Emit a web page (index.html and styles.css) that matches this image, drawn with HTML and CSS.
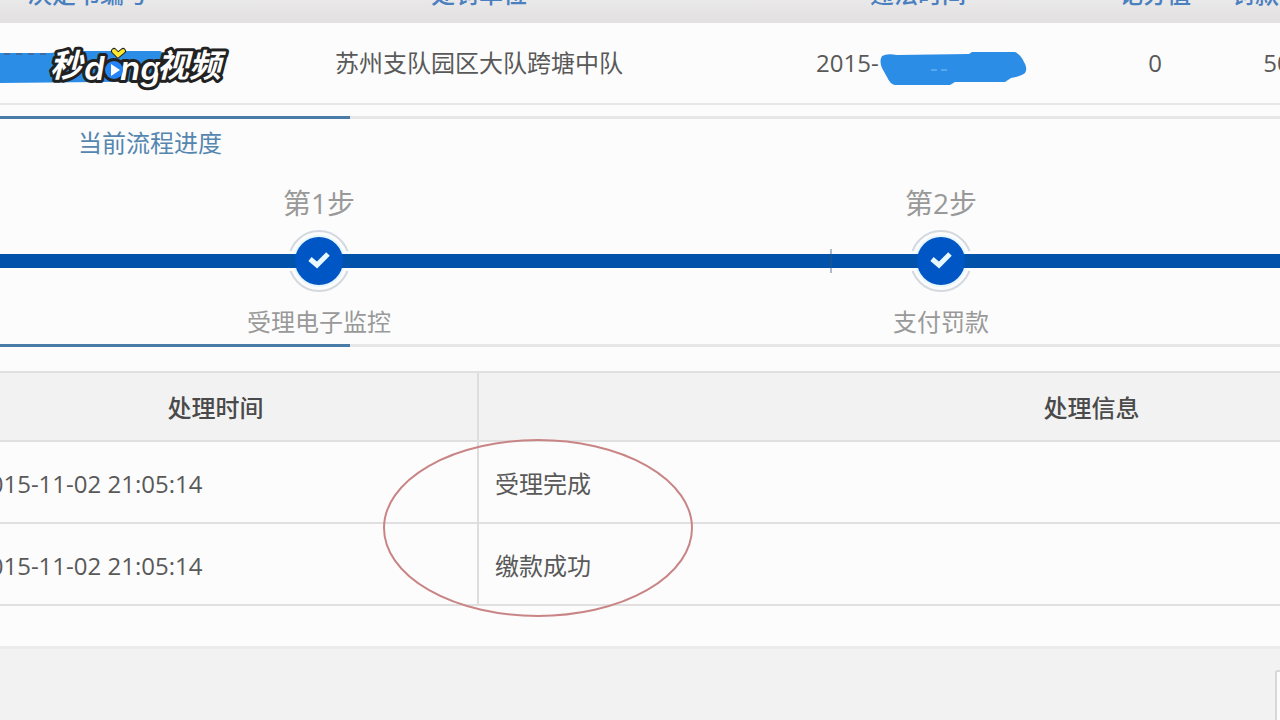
FILE: index.html
```html
<!DOCTYPE html>
<html lang="zh-CN">
<head>
  <meta charset="UTF-8">
  <title>当前流程进度</title>
  <link rel="stylesheet" href="styles.css">
</head>
<body>
  <main class="page">
    <table class="record">
      <colgroup>
        <col class="col-number">
        <col class="col-unit">
        <col class="col-time">
        <col class="col-small">
        <col class="col-small">
      </colgroup>
      <thead>
        <tr>
          <th>决定书编号</th>
          <th>处罚单位</th>
          <th>违法时间</th>
          <th>记分值</th>
          <th>罚款金额</th>
        </tr>
      </thead>
      <tbody>
        <tr>
          <td></td>
          <td>苏州支队园区大队跨塘中队</td>
          <td class="time">2015-</td>
          <td>0</td>
          <td>50</td>
        </tr>
      </tbody>
    </table>

    <section class="progress">
      <div class="rule"></div>
      <h2>当前流程进度</h2>
      <ol class="steps">
        <li class="step">
          <span class="step-name">第1步</span>
          <span class="marker">
            <svg width="66" height="66" viewBox="0 0 66 66">
              <circle cx="33" cy="33" r="30" fill="#fcfcfc" stroke="#d3d9df" stroke-width="2"/>
              <path d="M0 23H66V43H0Z" fill="#fcfcfc"/>
              <circle cx="33" cy="33" r="26" fill="#e6f6ff"/>
              <path d="M0 26H66V40H0Z" fill="#0052ab"/>
              <circle cx="33" cy="33" r="24" fill="#0056c4"/>
              <path d="M24 31L31 37L42 26" fill="none" stroke="#e8f8ff" stroke-width="5"/>
            </svg>
          </span>
          <span class="step-label">受理电子监控</span>
        </li>
        <li class="step">
          <span class="step-name">第2步</span>
          <span class="marker">
            <svg width="66" height="66" viewBox="0 0 66 66">
              <circle cx="33" cy="33" r="30" fill="#fcfcfc" stroke="#d3d9df" stroke-width="2"/>
              <path d="M0 23H66V43H0Z" fill="#fcfcfc"/>
              <circle cx="33" cy="33" r="26" fill="#e6f6ff"/>
              <path d="M0 26H66V40H0Z" fill="#0052ab"/>
              <circle cx="33" cy="33" r="24" fill="#0056c4"/>
              <path d="M24 31L31 37L42 26" fill="none" stroke="#e8f8ff" stroke-width="5"/>
            </svg>
          </span>
          <span class="step-label">支付罚款</span>
        </li>
      </ol>
      <div class="rule"></div>
    </section>

    <table class="history">
      <colgroup>
        <col class="col-when">
        <col>
      </colgroup>
      <thead>
        <tr>
          <th>处理时间</th>
          <th>处理信息</th>
        </tr>
      </thead>
      <tbody>
        <tr>
          <td>2015-11-02 21:05:14</td>
          <td>受理完成</td>
        </tr>
        <tr>
          <td>2015-11-02 21:05:14</td>
          <td>缴款成功</td>
        </tr>
      </tbody>
    </table>

    <!-- marks drawn over the page -->
    <svg class="scribble scribble-number" width="170" height="34" viewBox="0 0 170 34">
      <path d="M0 3L50 3L75 1L160 1Q168 4 169 12L168 31L100 32L0 33Z" fill="#2c8de6"/>
      <path d="M4 4h6M16 4h6M28 4h6M40 4h6" stroke="#3a6ea5" stroke-width="2"/>
    </svg>
    <svg class="scribble scribble-time" width="150" height="36" viewBox="0 0 150 36">
      <path d="M3 5Q8 2 18 4L90 3L93 1L136 1Q142 4 145 11Q149 17 146 22Q143 25 132 27L126 31L76 31L71 34L16 34Q11 33 8 26L3 17Q0 10 3 5Z" fill="#2c8de6"/>
      <path d="M52 19h6M62 19h6" stroke="#55a7f0" stroke-width="2"/>
    </svg>
    <svg class="circle-mark" width="312" height="180" viewBox="0 0 312 180">
      <ellipse cx="156" cy="90" rx="154" ry="88" fill="none" stroke="#c98586" stroke-width="2"/>
    </svg>
    <svg class="logo" width="200" height="56" viewBox="0 0 200 56">
      <circle cx="74" cy="28" r="12" fill="#222"/>
      <g class="logo-text">
        <text class="logo-han" x="10" y="35">秒</text>
        <text class="logo-latin" x="44" y="38">d</text>
        <text class="logo-latin" x="80" y="38">ng</text>
        <text class="logo-han" x="117" y="35">视频</text>
      </g>
      <circle cx="74" cy="28" r="9" fill="#2484f5"/>
      <path d="M71 22L80 28L71 34Z" fill="#fff"/>
      <path d="M74 9L78 13L83 9" fill="none" stroke="#222" stroke-width="6" stroke-linecap="round"/>
      <path d="M74 9L78 13L83 9" fill="none" stroke="#ffe92e" stroke-width="4" stroke-linecap="round"/>
    </svg>
  </main>
  <div class="corner-box"></div>
</body>
</html>
```
FILE: styles.css
```css
* {
  box-sizing: border-box;
}

body {
  margin: 0;
  min-height: 100vh;
  overflow: hidden;
  position: relative;
  background: #f2f2f2;
  color: #595959;
  font-family: "Open Sans", "Noto Sans CJK SC", sans-serif;
  font-size: 24px;
  line-height: 32px;
}

.page {
  overflow: hidden;
  padding-bottom: 40px;
  background: #fcfcfc;
  border-bottom: 3px solid #ebebeb;
}

table {
  border-collapse: separate;
  border-spacing: 0;
  table-layout: fixed;
}

/* top record, scrolled partly out of view */
.record {
  width: calc(100% + 100px);
  margin: -35px 0 0 -39px;
}

.col-number {
  width: 254px;
}

.col-time {
  width: 350px;
}

.col-small {
  width: 124px;
}

.record th {
  height: 58px;
  padding: 0;
  background: linear-gradient(#f6f6f6, #e2e0e1);
  color: #4a7fc0;
  font-weight: 500;
}

.record td {
  height: 82px;
  padding: 0;
  border-bottom: 2px solid #e7e7e7;
  text-align: center;
}

.record .time {
  padding-left: 73px;
  text-align: left;
}

.record td:last-child {
  padding-right: 4px;
}

.progress {
  margin-top: 11px;
}

.rule {
  height: 3px;
  background: #e7e7e7;
}

.rule::before {
  content: "";
  display: block;
  width: 350px;
  height: 3px;
  background: #4a7ca8;
}

.progress h2 {
  width: 300px;
  margin: 0 0 11px;
  color: #5586b0;
  font-size: 24px;
  font-weight: 400;
  line-height: 48px;
  text-align: center;
}

.steps {
  display: grid;
  grid-template-columns: repeat(2, 1fr);
  margin: 0;
  padding: 0 28px 0 8px;
  list-style: none;
  color: #999;
  text-align: center;
  /* the blue track runs behind the markers */
  background: linear-gradient(#0052ab, #0052ab) 0 76px / 100% 14px no-repeat;
}

.step {
  position: relative;
  display: flex;
  flex-direction: column;
  align-items: center;
}

.step + .step::before {
  content: "";
  position: absolute;
  top: 71px;
  left: 200px;
  width: 2px;
  height: 24px;
  background: rgba(50, 90, 130, 0.4);
}

.step-name {
  font-size: 28px;
  line-height: 50px;
}

.marker {
  height: 66px;
}

.marker svg {
  display: block;
}

.step-label {
  padding-top: 6px;
  line-height: 44px;
}

.history {
  width: calc(100% + 466px);
  margin: 24px 0 0 -42px;
  border-top: 2px solid #e0e0e0;
}

.col-when {
  width: 521px;
}

.history th {
  height: 69px;
  padding: 2px 0 0;
  background: #f2f2f2;
  border-bottom: 2px solid #e0e0e0;
  color: #4a4a4a;
  font-weight: 500;
}

.history td {
  height: 82px;
  padding: 4px 16px 0;
  border-bottom: 2px solid #e0e0e0;
}

.history th:first-child,
.history td:first-child {
  border-right: 2px solid #dedede;
}

.history th:first-child {
  padding-right: 4px;
}

.history td:first-child {
  padding-left: 18px;
}

.scribble,
.circle-mark,
.logo {
  position: absolute;
}

.scribble-number {
  top: 50px;
  left: 0;
}

.scribble-time {
  top: 51px;
  left: 879px;
}

.circle-mark {
  top: 438px;
  left: 382px;
}

.logo {
  top: 42px;
  left: 40px;
}

.logo-text {
  fill: #fff;
  stroke: #222;
  stroke-width: 6px;
  stroke-linejoin: round;
  paint-order: stroke;
  font-style: italic;
}

.logo-han {
  font-family: "Noto Sans CJK SC", sans-serif;
  font-size: 32px;
  font-weight: 700;
}

.logo-latin {
  font-family: Inter, sans-serif;
  font-size: 33px;
  font-weight: 600;
}

.corner-box {
  position: absolute;
  top: 670px;
  right: -40px;
  width: 45px;
  height: 60px;
  background: #fcfcfc;
  border: 2px solid #d8d8d8;
  border-radius: 3px;
}
```
